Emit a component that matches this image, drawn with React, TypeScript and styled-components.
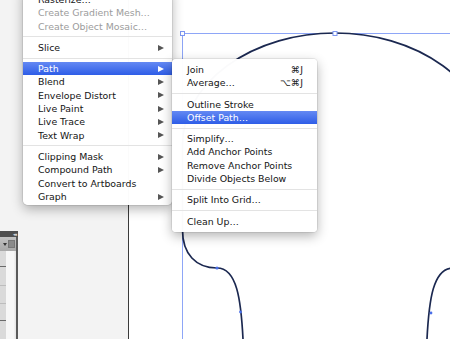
import React from 'react'
import styled, { createGlobalStyle } from 'styled-components'

// Illustrator "Object" menu, with the Path submenu open over the artboard
type Entry =
  | { label: string; disabled?: boolean; arrow?: boolean; active?: boolean; shortcut?: string }
  | 'sep'

const objectMenu: Entry[] = [
  { label: 'Rasterize…' },
  { label: 'Create Gradient Mesh…', disabled: true },
  { label: 'Create Object Mosaic…', disabled: true },
  'sep',
  { label: 'Slice', arrow: true },
  'sep',
  { label: 'Path', arrow: true, active: true },
  { label: 'Blend', arrow: true },
  { label: 'Envelope Distort', arrow: true },
  { label: 'Live Paint', arrow: true },
  { label: 'Live Trace', arrow: true },
  { label: 'Text Wrap', arrow: true },
  'sep',
  { label: 'Clipping Mask', arrow: true },
  { label: 'Compound Path', arrow: true },
  { label: 'Convert to Artboards' },
  { label: 'Graph', arrow: true },
]

const pathMenu: Entry[] = [
  { label: 'Join', shortcut: '⌘J' },
  { label: 'Average…', shortcut: '⌥⌘J' },
  'sep',
  { label: 'Outline Stroke' },
  { label: 'Offset Path…', active: true },
  'sep',
  { label: 'Simplify…' },
  { label: 'Add Anchor Points' },
  { label: 'Remove Anchor Points' },
  { label: 'Divide Objects Below' },
  'sep',
  { label: 'Split Into Grid…' },
  'sep',
  { label: 'Clean Up…' },
]

function MenuList({ items }: { items: Entry[] }) {
  return (
    <>
      {items.map((item, i) =>
        item === 'sep' ? (
          <Separator key={i} />
        ) : (
          <Row key={i} $active={item.active} $disabled={item.disabled}>
            <span>{item.label}</span>
            {item.shortcut && <Shortcut>{item.shortcut}</Shortcut>}
            {item.arrow && <Arrow $active={item.active} />}
          </Row>
        )
      )}
    </>
  )
}

export default function App() {
  return (
    <Stage>
      <GlobalStyle />
      <LeftPane>
        <DockPanel>
          <PanelHeader>
            <Collapse>◂◂</Collapse>
          </PanelHeader>
          <PanelToolbar>
            <MiniCaret />
            <MiniSquare />
          </PanelToolbar>
          <PanelBody>
            <Stripe>
              <StripeRow $h={15} $line="#6a6a6a" />
              <StripeRow $h={18} $line="#bdbdbd" />
              <StripeRow $h={17} $line="#bdbdbd" />
              <StripeRow $h={16} $line="#6a6a6a" />
            </Stripe>
            <PanelWell />
          </PanelBody>
        </DockPanel>
      </LeftPane>
      <Canvas>
        <svg width="321" height="339" viewBox="129 0 321 339">
          <line x1="182.5" y1="33.5" x2="450" y2="33.5" stroke="#8ea6f7" strokeWidth="1" />
          <line x1="182.5" y1="33.5" x2="182.5" y2="339" stroke="#8ea6f7" strokeWidth="1" />
          <path
            d="M 243 339 C 241 300 237 268 217 268 C 196 268 182.5 254 182.5 230 L 182.5 145 A 152.5 112 0 0 1 487.5 145 L 487.5 230 C 487.5 254 474 268 453 268 C 433 268 429 300 427 339"
            fill="none"
            stroke="#1b2850"
            strokeWidth="1.7"
          />
          <rect x="180.5" y="31.5" width="4" height="4" fill="#fff" stroke="#7d97f2" />
          <rect x="333" y="31.5" width="4" height="4" fill="#fff" stroke="#7d97f2" />
          <circle cx="217" cy="268" r="1.6" fill="#4a6fe8" />
          <circle cx="240.5" cy="312" r="1.4" fill="#4a6fe8" />
          <circle cx="431" cy="313" r="1.4" fill="#4a6fe8" />
        </svg>
      </Canvas>
      <MainMenu>
        <MenuList items={objectMenu} />
      </MainMenu>
      <SubMenu>
        <MenuList items={pathMenu} />
      </SubMenu>
    </Stage>
  )
}

// Styles
const GlobalStyle = createGlobalStyle`
  html, body {
    margin: 0;
    padding: 0;
    overflow: hidden;
    background: #fff;
  }
  body {
    font-family: "DejaVu Sans", "Noto Sans", sans-serif;
  }
`

const Stage = styled.div`
  position: relative;
  display: flex;
  width: 450px;
  height: 339px;
  overflow: hidden;
`

const LeftPane = styled.div`
  width: 128px;
  flex-shrink: 0;
  background: #f3f3f3;
  border-right: 1px solid #3a3a3a;
  display: flex;
  flex-direction: column;
  justify-content: flex-end;
`

const DockPanel = styled.div`
  width: 18px;
  height: 108px;
  display: flex;
  flex-direction: column;
`

const PanelHeader = styled.div`
  height: 6px;
  background: #4e4e4e;
  display: flex;
  align-items: center;
  justify-content: flex-end;
  overflow: hidden;
`

const Collapse = styled.span`
  font-size: 5px;
  line-height: 1;
  color: #d8d8d8;
  letter-spacing: -1px;
  padding-right: 2px;
`

const PanelToolbar = styled.div`
  height: 14px;
  background: linear-gradient(#c2c2c2, #a8a8a8);
  border-right: 2px solid #5a5a5a;
  display: flex;
  align-items: center;
  justify-content: flex-end;
  gap: 1px;
  padding-right: 1px;
`

const MiniCaret = styled.span`
  width: 0;
  height: 0;
  border-top: 3px solid #333;
  border-left: 2px solid transparent;
  border-right: 2px solid transparent;
`

const MiniSquare = styled.span`
  width: 5px;
  height: 6px;
  background: #8a8a8a;
  border: 1px solid #777;
`

const PanelBody = styled.div`
  flex: 1;
  display: flex;
  border-right: 2px solid #5a5a5a;
  background: #f6f6f6;
`

const Stripe = styled.div`
  width: 6px;
  background: #dadada;
  display: flex;
  flex-direction: column;
`

const StripeRow = styled.div<{ $h: number; $line: string }>`
  height: ${p => p.$h}px;
  border-bottom: 1px solid ${p => p.$line};
`

const PanelWell = styled.div`
  flex: 1;
  background: linear-gradient(to right, #f7f7f7 75%, #e4e4e4);
`

const Canvas = styled.div`
  flex: 1;
  background: #fff;
  svg {
    display: block;
  }
`

const MenuBox = styled.div`
  position: absolute;
  box-sizing: border-box;
  background: rgba(255, 255, 255, 0.98);
  box-shadow: 0 4px 12px rgba(0, 0, 0, 0.3), 0 0 0 1px rgba(0, 0, 0, 0.07);
  padding: 4px 0;
`

const MainMenu = styled(MenuBox)`
  left: 23px;
  top: -11px;
  width: 149px;
  padding-bottom: 2px;
  border-radius: 0 0 5px 5px;
  z-index: 1;
`

const SubMenu = styled(MenuBox)`
  left: 172px;
  top: 59px;
  width: 145px;
  border-radius: 4px;
  z-index: 2;
`

const Row = styled.div<{ $active?: boolean; $disabled?: boolean }>`
  height: 13.3px;
  display: flex;
  align-items: center;
  padding: 0 8px 0 15px;
  font-size: 9.4px;
  line-height: 1;
  white-space: nowrap;
  color: ${p => (p.$active ? '#fff' : p.$disabled ? '#9c9c9c' : '#141414')};
  background: ${p => (p.$active ? 'linear-gradient(#6489f3, #2e5de7)' : 'transparent')};
`

const Shortcut = styled.span`
  margin-left: auto;
  padding-right: 6px;
  color: #1a1a1a;
`

const Arrow = styled.span<{ $active?: boolean }>`
  margin-left: auto;
  width: 0;
  height: 0;
  border-left: 6px solid ${p => (p.$active ? '#fff' : '#565656')};
  border-top: 3.5px solid transparent;
  border-bottom: 3.5px solid transparent;
`

const Separator = styled.div`
  height: 8px;
  display: flex;
  align-items: center;
  &::after {
    content: '';
    flex: 1;
    height: 1px;
    background: #e3e3e3;
  }
`
